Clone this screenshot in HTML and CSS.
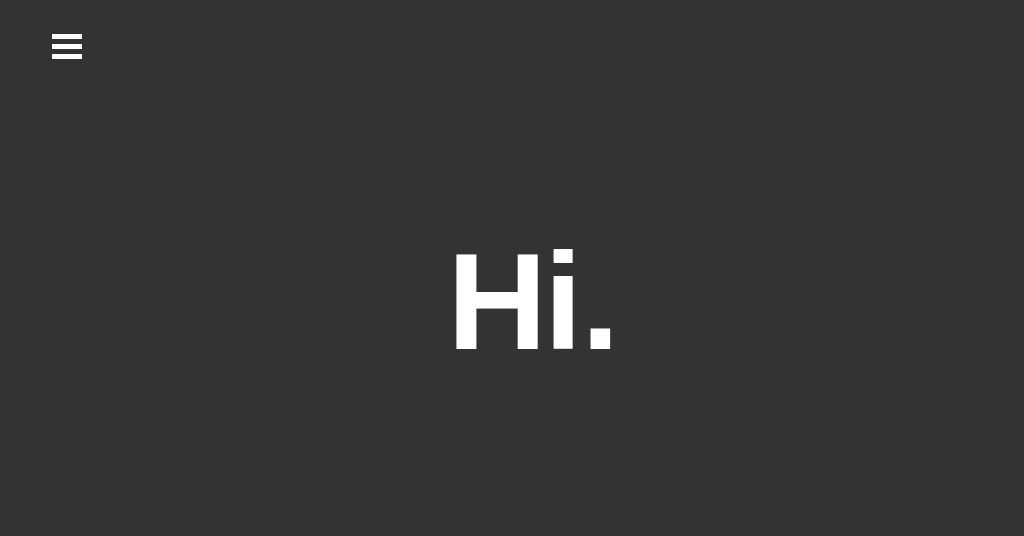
FILE: index.html
```html
<!DOCTYPE html>
<html>
<head>
<meta charset="utf-8">
<link rel="stylesheet" href="styles.css">
</head>
<body>
<header class="top">
  <button class="menu" aria-label="Menu">
    <span class="bar"></span>
    <span class="bar"></span>
    <span class="bar"></span>
  </button>
</header>
<main class="hero">
  <h1 class="greet"><span class="ch-h">H</span><span class="ch-i">i</span>.</h1>
</main>
</body>
</html>
```

FILE: styles.css
```css
html, body {
  margin: 0;
  padding: 0;
  height: 100%;
}
body {
  background: #333333;
  color: #ffffff;
  font-family: "Liberation Sans", Arial, sans-serif;
  display: flex;
  flex-direction: column;
}
.top {
  padding: 34px 0 0 52px;
  height: 25px;
}
.menu {
  background: none;
  border: 0;
  padding: 0;
  display: flex;
  flex-direction: column;
  gap: 5px;
  cursor: pointer;
}
.bar {
  display: block;
  width: 30px;
  height: 5px;
  background: #ffffff;
}
.hero {
  flex: 1;
  display: flex;
  justify-content: center;
  padding-left: 43px;
}
.greet {
  margin: 0;
  margin-top: 173px;
  font-size: 138px;
  font-weight: 700;
  line-height: 1;
}
.ch-h {
  letter-spacing: -3px;
}
.ch-i {
  letter-spacing: -1px;
}
```
